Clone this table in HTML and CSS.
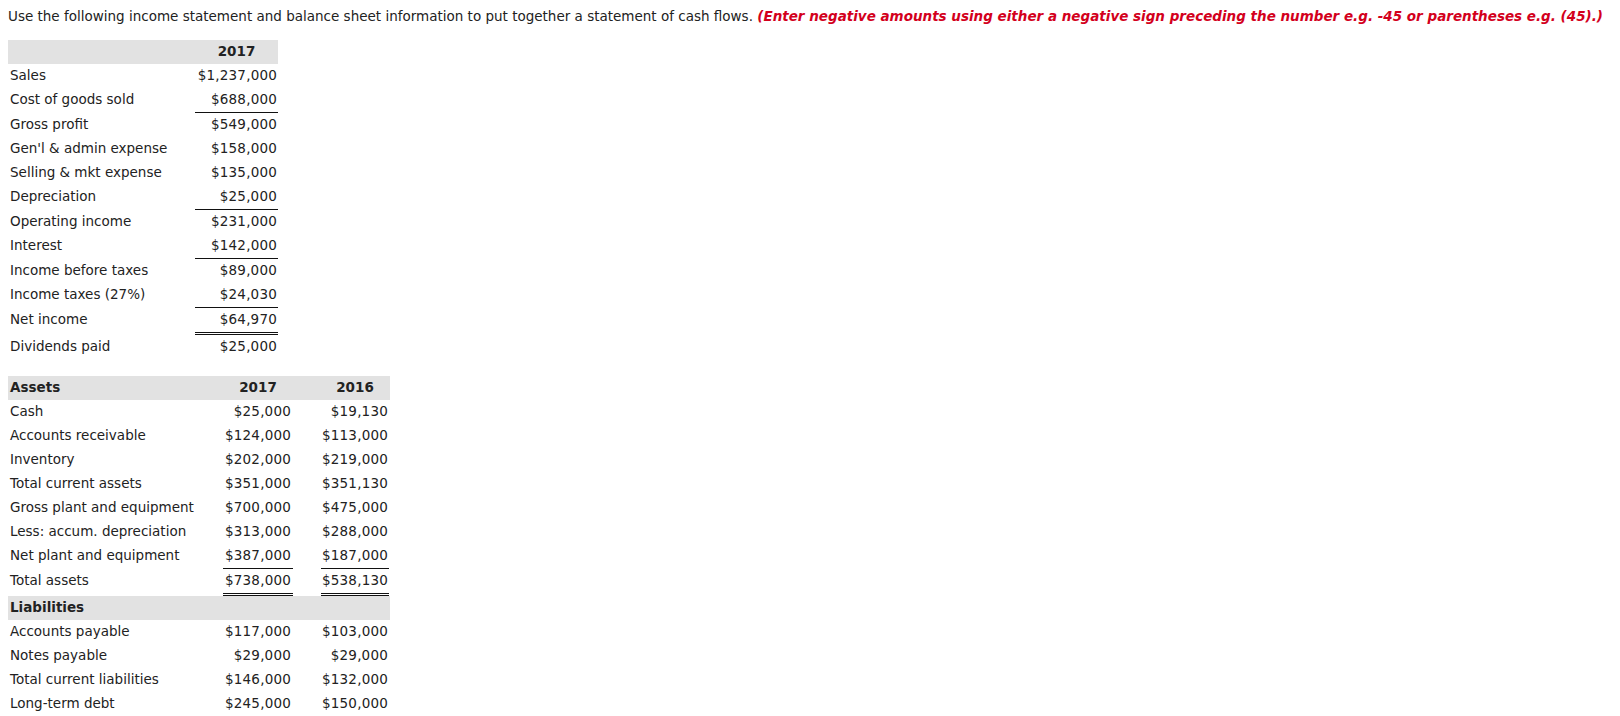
FILE: index.html
```html
<!DOCTYPE html>
<html>
<head>
<meta charset="utf-8">
<title>Cash flows</title>
<link rel="stylesheet" href="styles.css">
</head>
<body>
<p class="prompt">Use the following income statement and balance sheet information to put together a statement of cash flows. <em class="note">(Enter negative amounts using either a negative sign preceding the number e.g. -45 or parentheses e.g. (45).)</em></p>

<table class="fin income">
  <colgroup><col class="c-label"><col class="c-val"></colgroup>
  <tr class="head"><th></th><th><div class="v">2017</div></th></tr>
  <tr><td>Sales</td><td><div class="v">$1,237,000</div></td></tr>
  <tr><td>Cost of goods sold</td><td><div class="v under">$688,000</div></td></tr>
  <tr><td>Gross profit</td><td><div class="v">$549,000</div></td></tr>
  <tr><td>Gen'l &amp; admin expense</td><td><div class="v">$158,000</div></td></tr>
  <tr><td>Selling &amp; mkt expense</td><td><div class="v">$135,000</div></td></tr>
  <tr><td>Depreciation</td><td><div class="v under">$25,000</div></td></tr>
  <tr><td>Operating income</td><td><div class="v">$231,000</div></td></tr>
  <tr><td>Interest</td><td><div class="v under">$142,000</div></td></tr>
  <tr><td>Income before taxes</td><td><div class="v">$89,000</div></td></tr>
  <tr><td>Income taxes (27%)</td><td><div class="v under">$24,030</div></td></tr>
  <tr><td>Net income</td><td><div class="v dbl">$64,970</div></td></tr>
  <tr><td>Dividends paid</td><td><div class="v">$25,000</div></td></tr>
</table>

<table class="fin balance">
  <colgroup><col class="c-label"><col class="c-v1"><col class="c-v2"></colgroup>
  <tr class="head"><th>Assets</th><th class="y1"><div class="v">2017</div></th><th class="y2"><div class="v">2016</div></th></tr>
  <tr><td>Cash</td><td class="y1"><div class="v">$25,000</div></td><td class="y2"><div class="v">$19,130</div></td></tr>
  <tr><td>Accounts receivable</td><td class="y1"><div class="v">$124,000</div></td><td class="y2"><div class="v">$113,000</div></td></tr>
  <tr><td>Inventory</td><td class="y1"><div class="v">$202,000</div></td><td class="y2"><div class="v">$219,000</div></td></tr>
  <tr><td>Total current assets</td><td class="y1"><div class="v">$351,000</div></td><td class="y2"><div class="v">$351,130</div></td></tr>
  <tr><td>Gross plant and equipment</td><td class="y1"><div class="v">$700,000</div></td><td class="y2"><div class="v">$475,000</div></td></tr>
  <tr><td>Less: accum. depreciation</td><td class="y1"><div class="v">$313,000</div></td><td class="y2"><div class="v">$288,000</div></td></tr>
  <tr><td>Net plant and equipment</td><td class="y1"><div class="v under">$387,000</div></td><td class="y2"><div class="v under">$187,000</div></td></tr>
  <tr><td>Total assets</td><td class="y1"><div class="v dbl">$738,000</div></td><td class="y2"><div class="v dbl">$538,130</div></td></tr>
  <tr class="head"><th>Liabilities</th><th class="y1"></th><th class="y2"></th></tr>
  <tr><td>Accounts payable</td><td class="y1"><div class="v">$117,000</div></td><td class="y2"><div class="v">$103,000</div></td></tr>
  <tr><td>Notes payable</td><td class="y1"><div class="v">$29,000</div></td><td class="y2"><div class="v">$29,000</div></td></tr>
  <tr><td>Total current liabilities</td><td class="y1"><div class="v">$146,000</div></td><td class="y2"><div class="v">$132,000</div></td></tr>
  <tr><td>Long-term debt</td><td class="y1"><div class="v">$245,000</div></td><td class="y2"><div class="v">$150,000</div></td></tr>
</table>
</body>
</html>
```
FILE: styles.css
```css
html, body {
  background: #ffffff;
}
body {
  margin: 8px;
  font-family: "DejaVu Sans", Verdana, sans-serif;
  font-size: 13.5px;
  color: #222222;
}
.prompt {
  margin: 0;
  line-height: 16px;
  white-space: nowrap;
}
.note {
  color: #d3001c;
  font-weight: bold;
  font-style: italic;
}
.fin {
  border-collapse: collapse;
  table-layout: fixed;
  margin-left: -1px;
}
.fin td, .fin th {
  padding: 0;
  height: 24px;
  line-height: 22px;
  white-space: nowrap;
  vertical-align: top;
}
.fin td:first-child, .fin th:first-child {
  padding-left: 3px;
  text-align: left;
}
.fin .head th {
  background: #e2e2e2;
  font-weight: bold;
}
.fin .head th .v {
  text-align: center;
  padding-right: 0;
  letter-spacing: 0;
}
.v {
  text-align: right;
  padding-right: 1px;
  height: 24px;
  letter-spacing: 0.2px;
}
.v.under {
  border-bottom: 1px solid #111111;
}
.v.dbl {
  border-bottom: 3px double #111111;
}
.income {
  margin-top: 16px;
  width: 271px;
}
.income .c-label { width: 186px; }
.income .c-val { width: 85px; }
.income td .v, .income th .v {
  margin-left: 2px;
}
.balance {
  margin-top: 17px;
  width: 383px;
}
.balance .c-label { width: 216px; }
.balance .c-v1 { width: 71px; }
.balance .c-v2 { width: 96px; }
.balance .y1 .v {
  margin-right: 1px;
  padding-right: 2px;
}
.balance .y2 .v {
  margin-left: 27px;
  margin-right: 1px;
  padding-right: 1px;
}
```
